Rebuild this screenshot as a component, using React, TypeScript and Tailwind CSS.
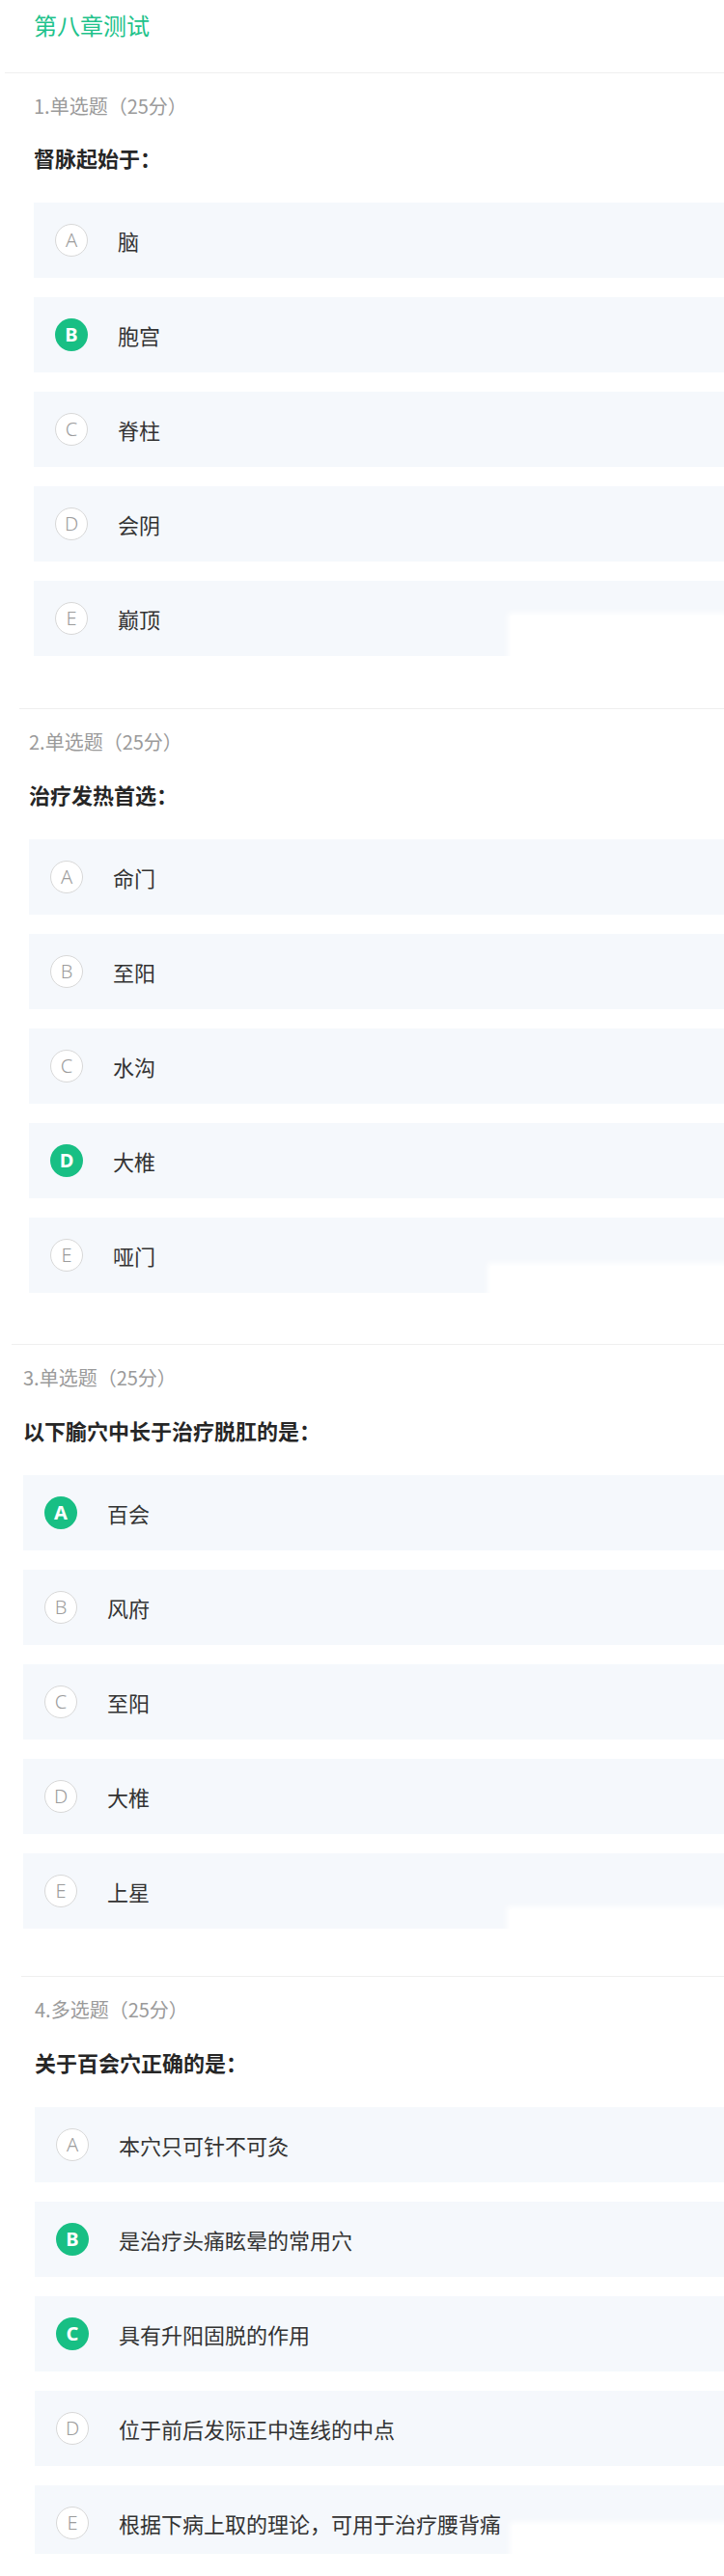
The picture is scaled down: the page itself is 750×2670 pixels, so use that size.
import React from "react";

type Q = {
  head: string;
  title: string;
  opts: string[];
  sel: number[];
  wrap: string;
  divider: string;
  pb: string;
  qmt: string;
  patch: string;
  lastCut?: boolean;
};

const questions: Q[] = [
  {
    head: "1.单选题（25分）",
    title: "督脉起始于：",
    opts: ["脑", "胞宫", "脊柱", "会阴", "巅顶"],
    sel: [1],
    wrap: "pl-[35px]",
    divider: "ml-[5px]",
    pb: "pb-[54px]",
    qmt: "mt-[32px]",
    patch: "left-[494px] top-[36px]",
  },
  {
    head: "2.单选题（25分）",
    title: "治疗发热首选：",
    opts: ["命门", "至阳", "水沟", "大椎", "哑门"],
    sel: [3],
    wrap: "pl-[30px]",
    divider: "ml-[20px]",
    pb: "pb-[53px]",
    qmt: "mt-[33px]",
    patch: "left-[478px] top-[50px]",
  },
  {
    head: "3.单选题（25分）",
    title: "以下腧穴中长于治疗脱肛的是：",
    opts: ["百会", "风府", "至阳", "大椎", "上星"],
    sel: [0],
    wrap: "pl-[24px]",
    divider: "ml-[12px]",
    pb: "pb-[49px]",
    qmt: "mt-[33px]",
    patch: "left-[504px] top-[58px]",
  },
  {
    head: "4.多选题（25分）",
    title: "关于百会穴正确的是：",
    opts: [
      "本穴只可针不可灸",
      "是治疗头痛眩晕的常用穴",
      "具有升阳固脱的作用",
      "位于前后发际正中连线的中点",
      "根据下病上取的理论，可用于治疗腰背痛",
    ],
    sel: [1, 2],
    wrap: "pl-[36px]",
    divider: "ml-[22px]",
    pb: "pb-[23px]",
    qmt: "mt-[33px]",
    patch: "left-[495px] top-[41px]",
    lastCut: true,
  },
];

const LETTERS = ["A", "B", "C", "D", "E"];

function Option({
  letter,
  text,
  selected,
  patch,
  cut,
}: {
  letter: string;
  text: string;
  selected: boolean;
  patch?: string;
  cut?: boolean;
}) {
  return (
    <div
      className={`relative flex items-center bg-[#f5f8fc] pl-[22px] ${
        cut ? "h-[71px] pt-[7px]" : "h-[78px]"
      }`}
    >
      {selected ? (
        <div className="flex h-[34px] w-[34px] shrink-0 items-center justify-center rounded-full bg-[#18bf84] text-[20px] font-bold text-white [font-family:'Noto_Sans','Liberation_Sans',sans-serif]">
          {letter}
        </div>
      ) : (
        <div className="flex h-[34px] w-[34px] shrink-0 items-center justify-center rounded-full border-[1.5px] border-[#d8d8d8] bg-white text-[20px] font-light text-[#9c9c9c] [font-family:'Noto_Sans','Liberation_Sans',sans-serif]">
          {letter}
        </div>
      )}
      <div className="ml-[31px] text-[22px] leading-[22px] text-[#333333]">{text}</div>
      {patch ? (
        <div
          className={`absolute ${patch} right-0 bottom-[-6px] bg-white shadow-[0_0_6px_3px_#ffffff]`}
        />
      ) : null}
    </div>
  );
}

export default function App() {
  return (
    <div className="min-h-[2670px] w-[750px] overflow-hidden bg-white [font-family:'Noto_Sans_CJK_SC','Noto_Sans',sans-serif]">
      <div className="pl-[35px] pt-[14px] text-[24px] leading-[24px] text-[#1ec28b]">
        第八章测试
      </div>
      <div className="mt-[37px]" />
      {questions.map((q, qi) => (
        <section key={qi} className={q.pb}>
          <div className={`h-px bg-[#efefef] ${q.divider}`} />
          <div className={q.wrap}>
            <div className="mt-[24px] text-[20px] leading-[20px] text-[#9a9a9a]">{q.head}</div>
            <div className={`${q.qmt} text-[22px] font-bold leading-[22px] text-[#262626]`}>
              {q.title}
            </div>
            <div className="mt-[36px] flex flex-col gap-[20px]">
              {q.opts.map((o, oi) => (
                <Option
                  key={oi}
                  letter={LETTERS[oi]}
                  text={o}
                  selected={q.sel.includes(oi)}
                  patch={oi === 4 ? q.patch : undefined}
                  cut={oi === 4 && q.lastCut}
                />
              ))}
            </div>
          </div>
        </section>
      ))}
    </div>
  );
}
